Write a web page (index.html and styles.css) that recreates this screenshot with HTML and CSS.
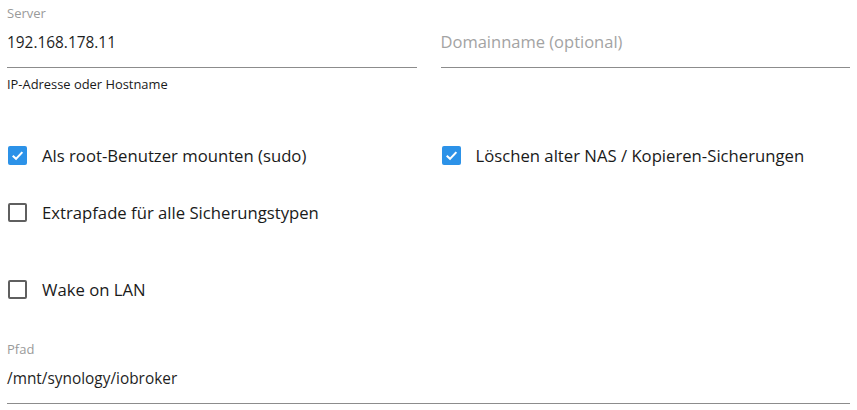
FILE: index.html
```html
<!DOCTYPE html>
<html lang="de">
<head>
    <meta charset="UTF-8">
    <title>NAS Einstellungen</title>
    <link rel="stylesheet" href="styles.css">
</head>
<body>
    <div class="form">
        <div class="row fields">
            <div class="field">
                <div class="label">Server</div>
                <div class="value">192.168.178.11</div>
                <div class="helper">IP-Adresse oder Hostname</div>
            </div>
            <div class="field">
                <div class="label"></div>
                <div class="value placeholder">Domainname (optional)</div>
            </div>
        </div>
        <div class="row checks first">
            <label class="check"><span class="box checked"><svg viewBox="0 0 18 18"><path d="M4.5 9.3 L7.6 12.2 L13.6 5.8" /></svg></span>Als root-Benutzer mounten (sudo)</label>
            <label class="check"><span class="box checked"><svg viewBox="0 0 18 18"><path d="M4.5 9.3 L7.6 12.2 L13.6 5.8" /></svg></span>Löschen alter NAS / Kopieren-Sicherungen</label>
        </div>
        <div class="row checks second">
            <label class="check"><span class="box"></span>Extrapfade für alle Sicherungstypen</label>
        </div>
        <div class="row checks third">
            <label class="check"><span class="box"></span>Wake on LAN</label>
        </div>
        <div class="field wide">
            <div class="label">Pfad</div>
            <div class="value">/mnt/synology/iobroker</div>
        </div>
    </div>
</body>
</html>
```

FILE: styles.css
```css
body {
    margin: 0;
    font-family: "Open Sans", sans-serif;
    color: #1f1f1f;
    background: #fff;
}
.form {
    padding: 5px 7px 0 7px;
}
.row {
    display: grid;
    grid-template-columns: 1fr 1fr;
    column-gap: 24px;
}
.label {
    font-size: 13px;
    line-height: 16px;
    height: 16px;
    color: #9a9a9a;
}
.value {
    font-size: 15.4px;
    line-height: 20px;
    padding: 12px 0 14px 0;
    border-bottom: 1px solid #8c8c8c;
}
.value.placeholder {
    font-size: 16.5px;
    padding: 11px 0 15px 0;
    color: #a3a3a3;
}
.helper {
    font-size: 12.9px;
    line-height: 16px;
    margin-top: 8px;
    color: #1a1a1a;
}
.checks {
    height: 42px;
    align-items: center;
}
.checks.first {
    margin-top: 42px;
}
.checks.second {
    margin-top: 15px;
}
.checks.third {
    margin-top: 35px;
}
.check {
    display: flex;
    align-items: center;
    font-size: 16.7px;
    color: #1a1a1a;
}
.box {
    box-sizing: border-box;
    width: 19px;
    height: 19px;
    margin: 0 15px 0 1px;
    border: 2px solid #5f5f5f;
    border-radius: 2px;
    display: flex;
}
.box.checked {
    border: none;
    background: #2c92e8;
}
.box svg {
    width: 19px;
    height: 19px;
}
.box path {
    fill: none;
    stroke: #fff;
    stroke-width: 2;
}
.field.wide {
    margin-top: 31px;
}
```
